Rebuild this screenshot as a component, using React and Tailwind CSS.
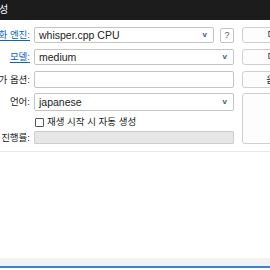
import { useState } from "react";

const font = { fontFamily: '"Liberation Sans", "Noto Sans CJK KR", sans-serif' };

function Label({ children, link }) {
  return (
    <div className="w-[34px] shrink-0 flex justify-end pr-[4px] whitespace-nowrap text-[9.5px]">
      <span className={link ? "text-[#0a63c9] underline underline-offset-2" : "text-[#1b1b1b]"}>{children}</span>
    </div>
  );
}

function Combo({ value, className }) {
  return (
    <div className={`h-full flex items-center justify-between border border-[#c4c4c4] rounded-[2px] bg-white pl-[4px] pr-[6px] ${className}`}>
      <span className="text-[#1b1b1b]">{value}</span>
      <span className="text-[8px] text-[#4b5877] font-bold">v</span>
    </div>
  );
}

function SideButton({ label, className }) {
  return (
    <div className={`w-[86px] shrink-0 border border-[#cfcfcf] rounded-[3px] bg-[#fdfdfd] flex items-center justify-center whitespace-nowrap text-[9.5px] text-[#1b1b1b] ${className}`}>
      {label}
    </div>
  );
}

export default function App() {
  const [autoStart, setAutoStart] = useState(false);

  return (
    <div className="w-[270px] h-[270px] overflow-hidden bg-white flex flex-col text-[10.5px] leading-none" style={font}>
      {/* title bar */}
      <div className="h-[20px] shrink-0 bg-[#1c1c1c] flex items-center text-white text-[10px]">
        <span className="ml-[-1px]">성</span>
      </div>

      <div className="flex pt-[7px] gap-[8px]">
        <div className="w-[234px] shrink-0 flex flex-col">
          <div className="h-[16px] flex items-center">
            <Label link>화 엔진:</Label>
            <Combo value="whisper.cpp CPU" className="w-[180px]" />
            <div className="ml-[6px] w-[14px] h-[15px] border border-[#c4c4c4] rounded-[2px] flex items-center justify-center text-[9px] text-[#555]">?</div>
          </div>
          <div className="h-[16px] mt-[6px] flex items-center">
            <Label link>모델:</Label>
            <Combo value="medium" className="flex-1" />
          </div>
          <div className="h-[17px] mt-[6px] flex items-center">
            <Label>가 옵션:</Label>
            <div className="flex-1 h-full border border-[#c4c4c4] rounded-[2px] bg-white" />
          </div>
          <div className="h-[18px] mt-[5px] flex items-center">
            <Label>언어:</Label>
            <Combo value="japanese" className="flex-1" />
          </div>
          <label className="h-[12px] mt-[5px] pl-[35px] flex items-center gap-[3px] text-[9.5px] text-[#1b1b1b]">
            <input
              type="checkbox"
              checked={autoStart}
              onChange={(e) => setAutoStart(e.target.checked)}
              className="appearance-none w-[9px] h-[9px] border border-[#555] rounded-[1px] bg-white"
            />
            <span>재생 시작 시 자동 생성</span>
          </label>
          <div className="h-[13px] mt-[3px] flex items-center">
            <Label>진행률:</Label>
            <div className="flex-1 h-full border border-[#cdcdcd] bg-[#e6e6e6] rounded-[1px]" />
          </div>
        </div>

        <div className="flex flex-col">
          <SideButton label="다운로드" className="h-[16px]" />
          <SideButton label="다운로드" className="h-[16px] mt-[6px]" />
          <SideButton label="음성 파일" className="h-[17px] mt-[6px]" />
          <SideButton label="" className="h-[51px] mt-[5px]" />
        </div>
      </div>

      <div className="mt-[7px] h-px bg-[#e8e8e8]" />
      <div className="flex-1" />
      <div className="h-[8px] bg-[#f2f2f2]" />
      <div className="h-[2px] bg-[#3b83d1]" />
      <div className="h-[2px] bg-white" />
    </div>
  );
}
